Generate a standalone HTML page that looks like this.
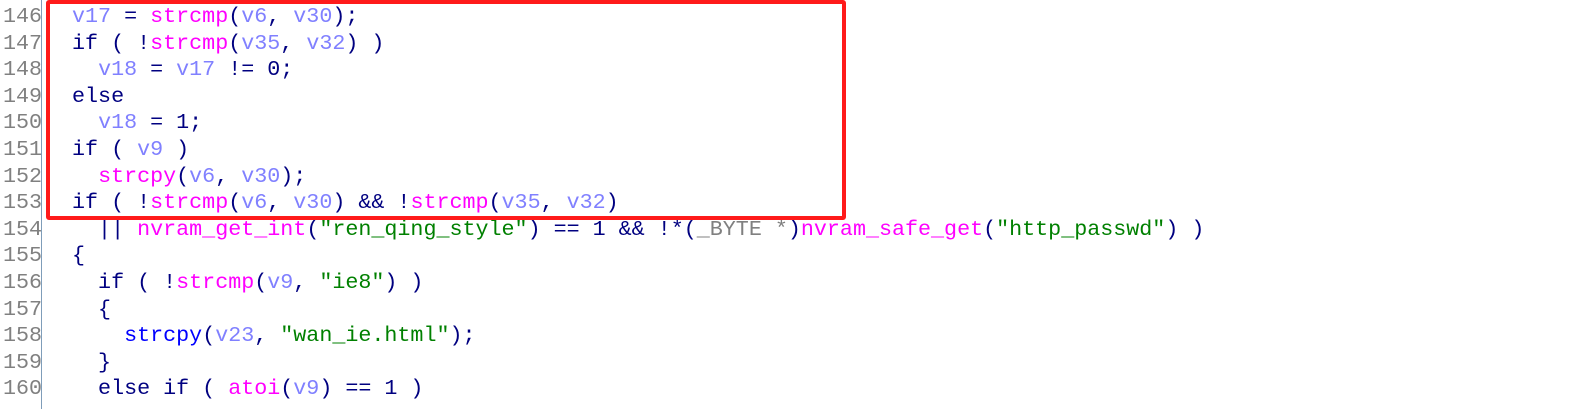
<!DOCTYPE html>
<html><head><meta charset="utf-8"><style>
html,body{margin:0;padding:0;background:#fff;width:1574px;height:409px;overflow:hidden;position:relative}
.g{position:absolute;left:0;top:0;width:41px;height:409px;border-right:1px solid #7f9db9}
pre{margin:0;font-family:"Liberation Mono",monospace;font-size:21.7px;line-height:26.6px;position:absolute;top:4px;color:#000080}
.n{left:3px;color:#808080}
.c{left:46px}
.v{color:#8080ff}.f{color:#ff00ff}.s{color:#008000}.b{color:#0000ff}.t{color:#808080}
.box{position:absolute;left:46px;top:0px;width:792px;height:212px;border:4px solid #ff1a1a;border-radius:3px}
</style></head><body>
<div class="g"></div>
<pre class="n">146
147
148
149
150
151
152
153
154
155
156
157
158
159
160</pre>
<pre class="c">  <span class="v">v17</span> = <span class="f">strcmp</span>(<span class="v">v6</span>, <span class="v">v30</span>);
  if ( !<span class="f">strcmp</span>(<span class="v">v35</span>, <span class="v">v32</span>) )
    <span class="v">v18</span> = <span class="v">v17</span> != 0;
  else
    <span class="v">v18</span> = 1;
  if ( <span class="v">v9</span> )
    <span class="f">strcpy</span>(<span class="v">v6</span>, <span class="v">v30</span>);
  if ( !<span class="f">strcmp</span>(<span class="v">v6</span>, <span class="v">v30</span>) &amp;&amp; !<span class="f">strcmp</span>(<span class="v">v35</span>, <span class="v">v32</span>)
    || <span class="f">nvram_get_int</span>(<span class="s">"ren_qing_style"</span>) == 1 &amp;&amp; !*(<span class="t">_BYTE *</span>)<span class="f">nvram_safe_get</span>(<span class="s">"http_passwd"</span>) )
  {
    if ( !<span class="f">strcmp</span>(<span class="v">v9</span>, <span class="s">"ie8"</span>) )
    {
      <span class="b">strcpy</span>(<span class="v">v23</span>, <span class="s">"wan_ie.html"</span>);
    }
    else if ( <span class="f">atoi</span>(<span class="v">v9</span>) == 1 )</pre>
<div class="box"></div>
</body></html>
